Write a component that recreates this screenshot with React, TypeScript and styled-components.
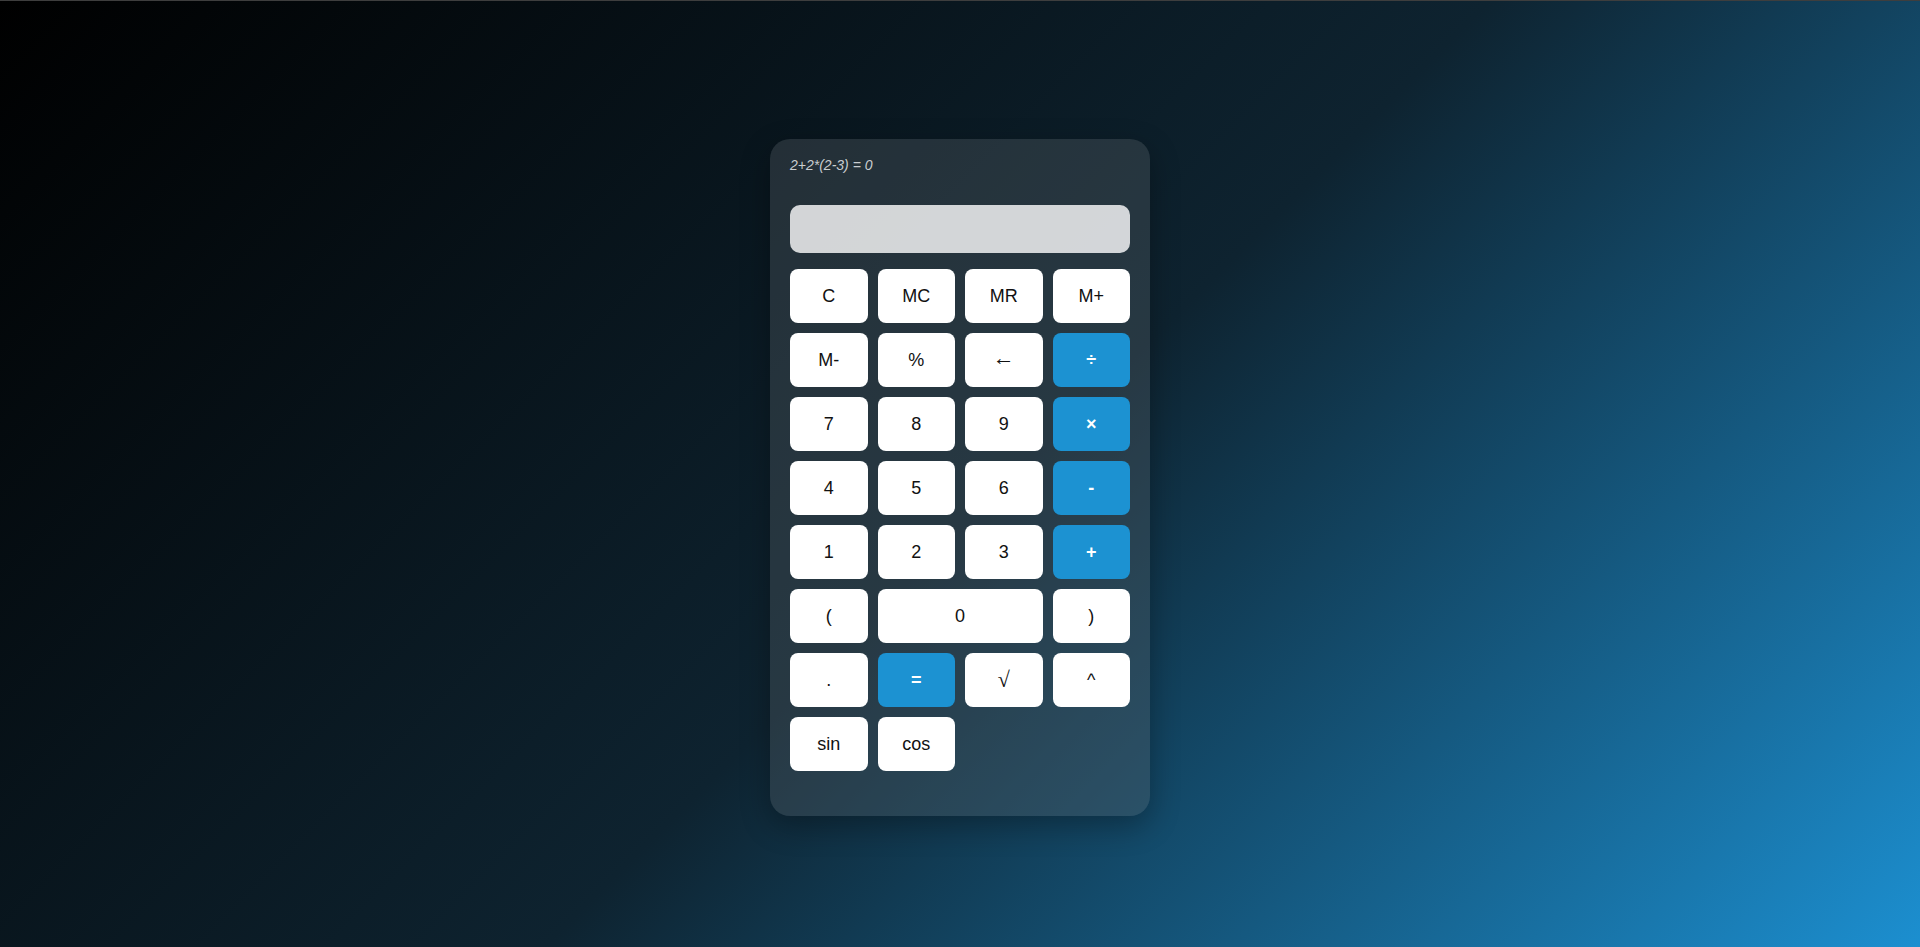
import React from "react";
import styled, { createGlobalStyle } from "styled-components";

const Global = createGlobalStyle`
  html, body { margin: 0; padding: 0; }
  body { font-family: "Liberation Sans", Arial, sans-serif; }
`;

const Page = styled.div`
  box-sizing: border-box;
  width: 100%;
  height: 947px;
  border-top: 1px solid #3e3e3e;
  padding-top: 7px;
  display: flex;
  align-items: center;
  justify-content: center;
  background: linear-gradient(135deg, #000000 0%, #0e2330 52%, #1c8fd0 100%);
`;

const Card = styled.div`
  box-sizing: border-box;
  width: 380px;
  padding: 20px 20px 45px;
  border-radius: 20px;
  background: rgba(92, 104, 110, 0.32);
  box-shadow: 0 10px 30px rgba(0, 0, 0, 0.3);
  display: flex;
  flex-direction: column;
`;

const History = styled.div`
  height: 36px;
  margin-bottom: 10px;
  font-family: "Liberation Sans", Arial, sans-serif;
  font-style: italic;
  font-size: 14px;
  line-height: 13px;
  color: #c9cdd0;
`;

const Display = styled.div`
  height: 48px;
  border-radius: 10px;
  background: rgba(255, 255, 255, 0.8);
  margin-bottom: 16px;
`;

const Grid = styled.div`
  display: grid;
  grid-template-columns: repeat(4, 1fr);
  grid-auto-rows: 54px;
  gap: 10px;
`;

const Key = styled.button<{ $op?: boolean; $wide?: boolean; $serif?: boolean; $lift?: boolean }>`
  border: none;
  border-radius: 8px;
  font-family: ${(p) =>
    p.$serif ? `"Liberation Serif", "DejaVu Serif", serif` : `"Liberation Sans", Arial, sans-serif`};
  font-size: ${(p) => (p.$serif ? "22px" : "18px")};
  cursor: pointer;
  padding: 0 0 ${(p) => (p.$lift ? "5px" : "0")};
  grid-column: ${(p) => (p.$wide ? "span 2" : "auto")};
  background: ${(p) => (p.$op ? "#1c92d2" : "#ffffff")};
  color: ${(p) => (p.$op ? "#ffffff" : "#111111")};
  font-weight: ${(p) => (p.$op ? "bold" : "normal")};
`;

const keys: { label: string; op?: boolean; wide?: boolean; serif?: boolean; lift?: boolean }[] = [
  { label: "C" }, { label: "MC" }, { label: "MR" }, { label: "M+" },
  { label: "M-" }, { label: "%" }, { label: "←", serif: true, lift: true }, { label: "÷", op: true },
  { label: "7" }, { label: "8" }, { label: "9" }, { label: "×", op: true },
  { label: "4" }, { label: "5" }, { label: "6" }, { label: "-", op: true },
  { label: "1" }, { label: "2" }, { label: "3" }, { label: "+", op: true },
  { label: "(" }, { label: "0", wide: true }, { label: ")" },
  { label: "." }, { label: "=", op: true }, { label: "√", serif: true }, { label: "^" },
  { label: "sin" }, { label: "cos" },
];

export default function App() {
  return (
    <>
      <Global />
      <Page>
        <Card>
          <History>2+2*(2-3) = 0</History>
          <Display />
          <Grid>
            {keys.map((k) => (
              <Key key={k.label} $op={k.op} $wide={k.wide} $serif={k.serif} $lift={k.lift}>
                {k.label}
              </Key>
            ))}
          </Grid>
        </Card>
      </Page>
    </>
  );
}
